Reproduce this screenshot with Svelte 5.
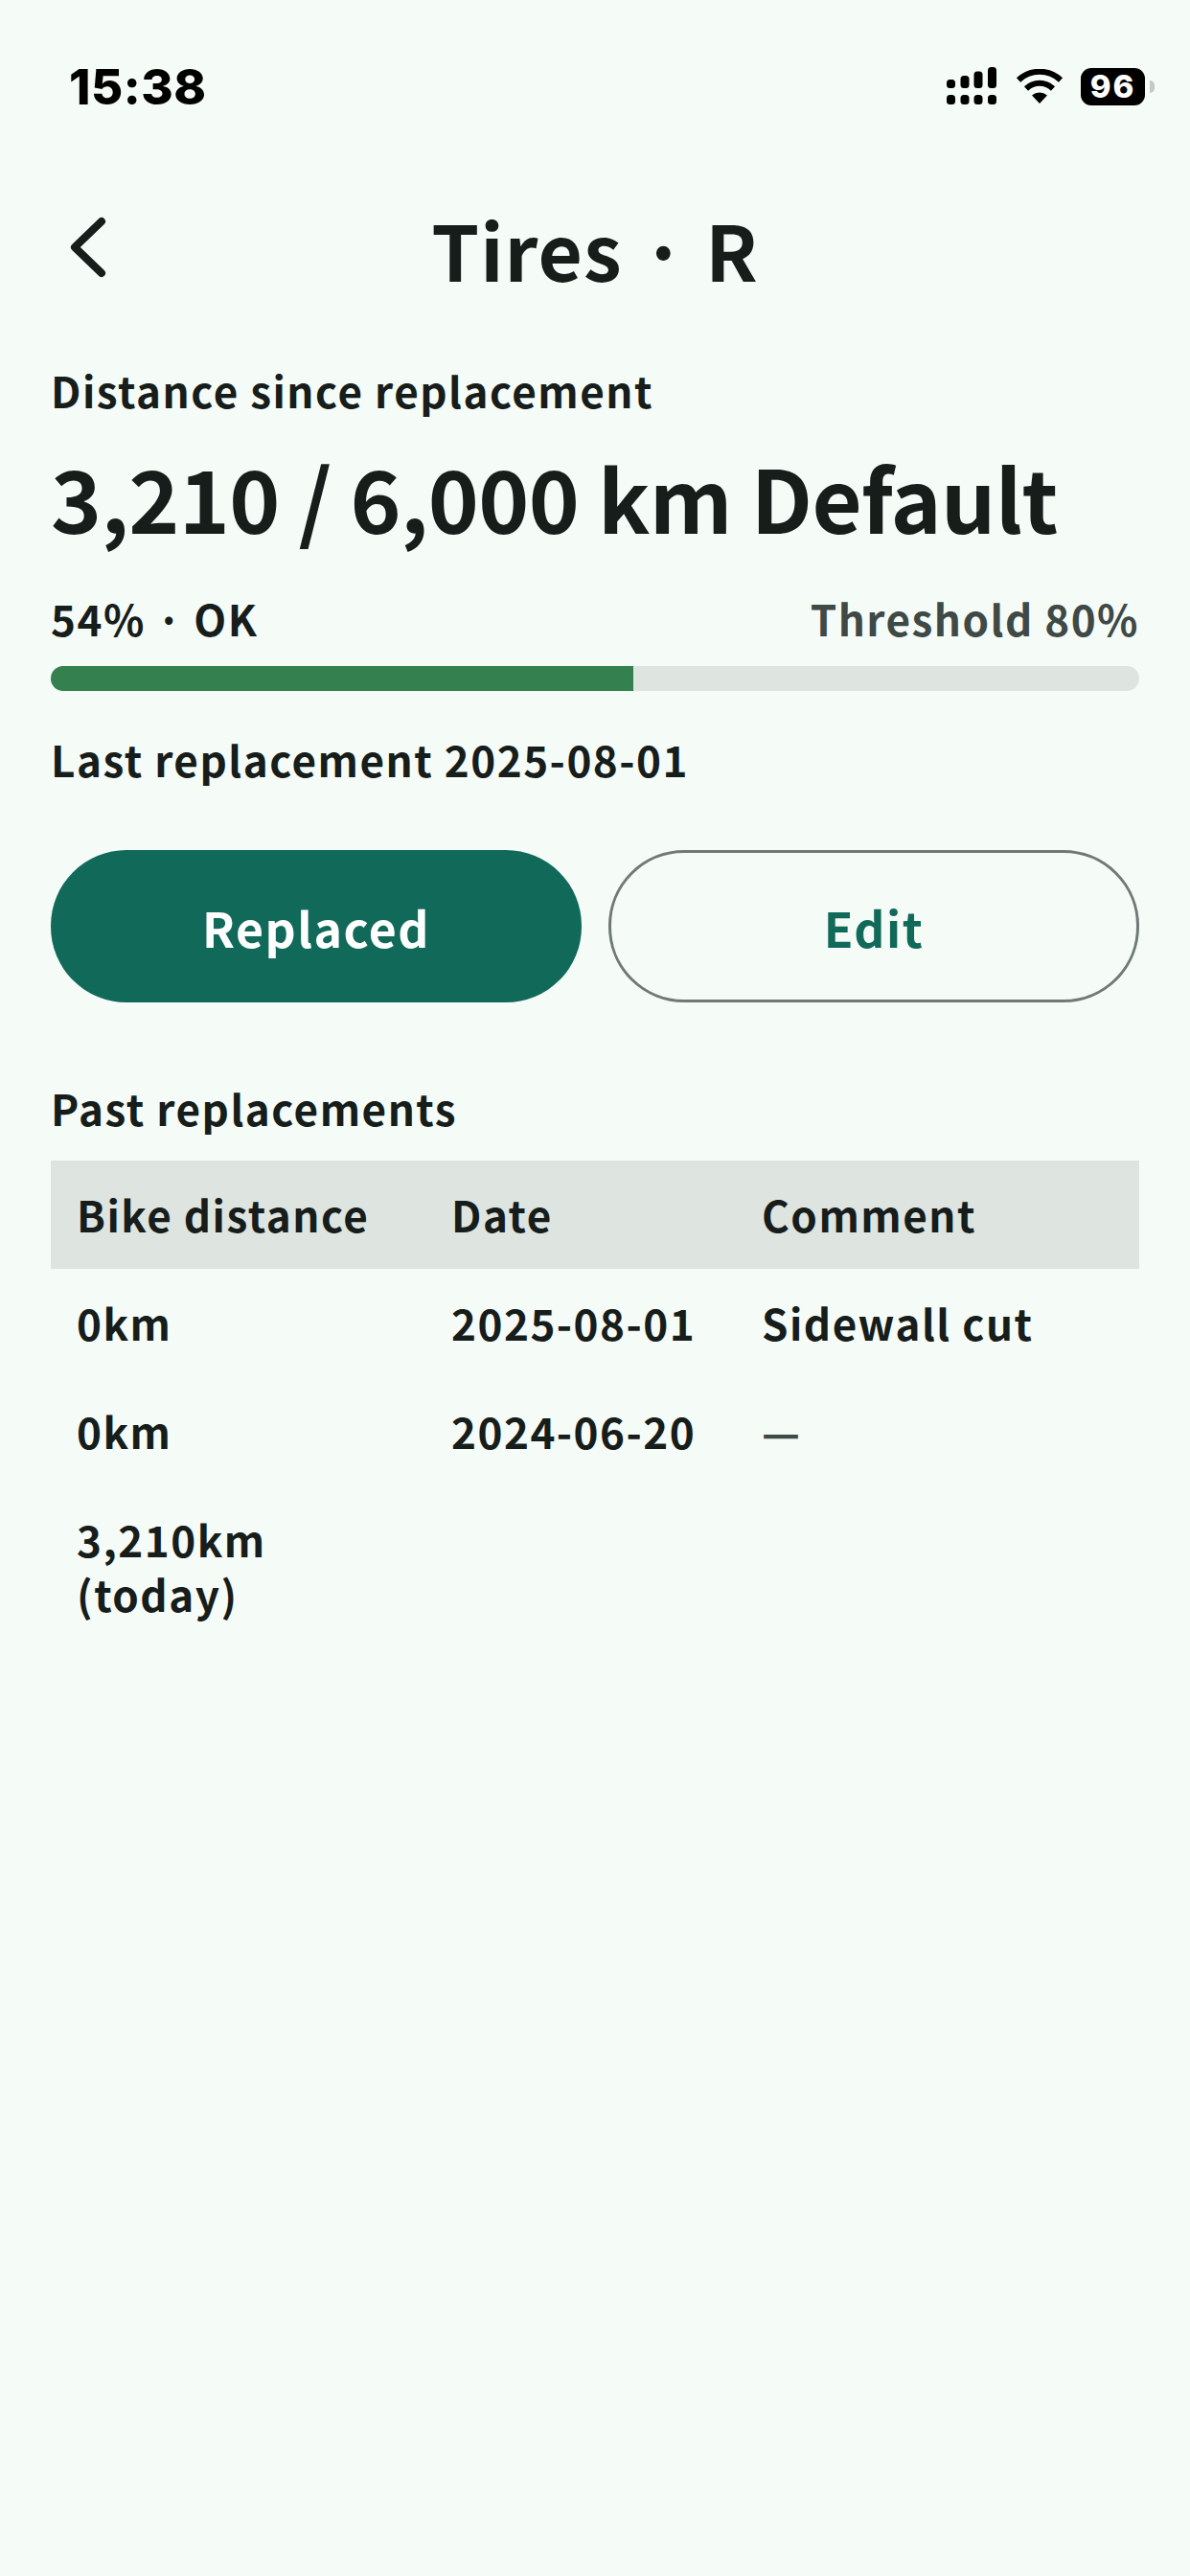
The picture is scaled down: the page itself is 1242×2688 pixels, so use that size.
<script>
  const rows = [
    { distance: "0km", date: "2025-08-01", comment: "Sidewall cut" },
    { distance: "0km", date: "2024-06-20", comment: "—", muted: true },
    { distance: "3,210km (today)", date: "", comment: "" },
  ];

  const used = 3210;
  const limit = 6000;
  const percent = (used / limit) * 100;
</script>

<div class="screen">
  <div class="status">
    <span class="time">15:38</span>
    <div class="status-icons">
      <svg class="signal" viewBox="0 0 54 40" width="54" height="40" aria-hidden="true">
        <rect x="0" y="13" width="9" height="9" rx="3.5" />
        <rect x="14.5" y="9" width="9" height="13" rx="3.5" />
        <rect x="28.5" y="4.5" width="9" height="17.5" rx="3.5" />
        <rect x="43" y="0" width="9" height="22" rx="3.5" />
        <rect x="0" y="29" width="9" height="10" rx="3.5" />
        <rect x="14.5" y="29" width="9" height="10" rx="3.5" />
        <rect x="28.5" y="29" width="9" height="10" rx="3.5" />
        <rect x="43" y="29" width="9" height="10" rx="3.5" />
      </svg>
      <svg class="wifi" viewBox="0 0 50 36" width="50" height="36" aria-hidden="true">
        <path d="M3 11.5A32 32 0 0 1 47 11.5" fill="none" stroke="#000" stroke-width="6" />
        <path d="M11 20.5A20 20 0 0 1 39 20.5" fill="none" stroke="#000" stroke-width="6" />
        <path d="M25 36L17 27.500A12 12 0 0 1 33 27.500Z" fill="#000" />
      </svg>
      <div class="battery">
        <span class="level">96</span>
        <span class="nub"></span>
      </div>
    </div>
  </div>

  <header class="top">
    <button class="back" type="button" aria-label="Back">
      <svg viewBox="0 0 44 70" width="44" height="70" aria-hidden="true">
        <path d="M36 8L8 35L36 62" fill="none" stroke="#171d1b" stroke-width="8" stroke-linecap="round" stroke-linejoin="round" />
      </svg>
    </button>
    <h1>Tires · R</h1>
  </header>

  <main>
    <div class="label">Distance since replacement</div>
    <div class="total">3,210 / 6,000 km Default</div>

    <div class="stats">
      <span>54% · OK</span>
      <span class="threshold">Threshold 80%</span>
    </div>
    <div class="track">
      <div class="fill" style="width: {percent}%"></div>
    </div>

    <div class="last">Last replacement 2025-08-01</div>

    <div class="actions">
      <button class="btn primary" type="button">Replaced</button>
      <button class="btn outline" type="button">Edit</button>
    </div>

    <div class="past">Past replacements</div>

    <table>
      <colgroup>
        <col class="c1" />
        <col class="c2" />
        <col />
      </colgroup>
      <thead>
        <tr>
          <th>Bike distance</th>
          <th>Date</th>
          <th>Comment</th>
        </tr>
      </thead>
      <tbody>
        {#each rows as row}
          <tr>
            <td>{row.distance}</td>
            <td>{row.date}</td>
            <td class:muted={row.muted}>{row.comment}</td>
          </tr>
        {/each}
      </tbody>
    </table>
  </main>
</div>

<style>
  :global(body) {
    background: #f5fbf7;
  }

  .screen {
    height: 2688px;
    background: #f5fbf7;
    color: #171d1b;
    font-family: "Noto Sans CJK JP", "Noto Sans", sans-serif;
    font-weight: 700;
    overflow: hidden;
  }

  .status {
    height: 180px;
    display: flex;
    align-items: center;
    justify-content: space-between;
    padding: 0 37px 0 72px;
    color: #000;
  }

  .time {
    font-family: Inter, sans-serif;
    font-weight: 800;
    font-size: 51px;
    letter-spacing: 0.5px;
  }

  .status-icons {
    display: flex;
    align-items: center;
  }

  .signal {
    margin-right: 18px;
  }

  .signal rect {
    fill: #000;
  }

  .wifi {
    margin-right: 18px;
  }

  .battery {
    display: flex;
    align-items: center;
  }

  .level {
    width: 67px;
    height: 39px;
    background: #000;
    border-radius: 11px;
    color: #fff;
    font-family: Inter, sans-serif;
    font-weight: 800;
    font-size: 33px;
    line-height: 39px;
    letter-spacing: 2px;
    text-align: center;
  }

  .nub {
    width: 5px;
    height: 13px;
    margin-left: 5px;
    background: #c4c8c6;
    border-radius: 0 6px 6px 0;
  }

  .top {
    height: 158px;
    position: relative;
    display: flex;
    align-items: center;
    justify-content: center;
  }

  .back {
    all: unset;
    position: absolute;
    left: 70px;
    top: 43px;
    line-height: 0;
  }

  h1 {
    margin: 0;
    font-size: 80px;
    font-weight: 700;
    line-height: 1;
    letter-spacing: 1px;
  }

  main {
    padding: 39px 53px 0;
  }

  .label {
    font-size: 44px;
    line-height: 60px;
    letter-spacing: 1.5px;
  }

  .total {
    margin-top: 21px;
    font-size: 90px;
    line-height: 120px;
    letter-spacing: -0.6px;
  }

  .stats {
    margin-top: 39px;
    display: flex;
    justify-content: space-between;
    font-size: 44px;
    line-height: 56px;
    letter-spacing: 1.5px;
  }

  .threshold {
    color: #3f4946;
  }

  .track {
    margin-top: 22px;
    height: 26px;
    background: #dee4e0;
    border-radius: 13px;
    overflow: hidden;
  }

  .fill {
    height: 100%;
    background: #34804e;
  }

  .last {
    margin-top: 43px;
    font-size: 44px;
    line-height: 56px;
    letter-spacing: 1.5px;
  }

  .actions {
    margin-top: 67px;
    display: grid;
    grid-template-columns: 1fr 1fr;
    gap: 28px;
  }

  .btn {
    all: unset;
    box-sizing: border-box;
    height: 159px;
    border-radius: 79px;
    font-size: 50px;
    text-align: center;
    letter-spacing: 1.5px;
  }

  .primary {
    background: #116a59;
    color: #fff;
  }

  .outline {
    border: 3px solid #6f7976;
    color: #116a59;
  }

  .past {
    margin-top: 82px;
    font-size: 44px;
    line-height: 56px;
    letter-spacing: 1.5px;
  }

  table {
    margin-top: 27px;
    width: 100%;
    table-layout: fixed;
    border-collapse: collapse;
    font-size: 44px;
    line-height: 57px;
    letter-spacing: 1.5px;
  }

  .c1 {
    width: 390px;
  }

  .c2 {
    width: 324px;
  }

  th {
    background: #dee4e0;
    font-weight: 700;
    text-align: left;
    padding: 28px;
  }

  td {
    padding: 28px;
    vertical-align: top;
  }

  th:first-child,
  td:first-child {
    padding-left: 27px;
  }

  .muted {
    color: #3f4946;
  }
</style>
